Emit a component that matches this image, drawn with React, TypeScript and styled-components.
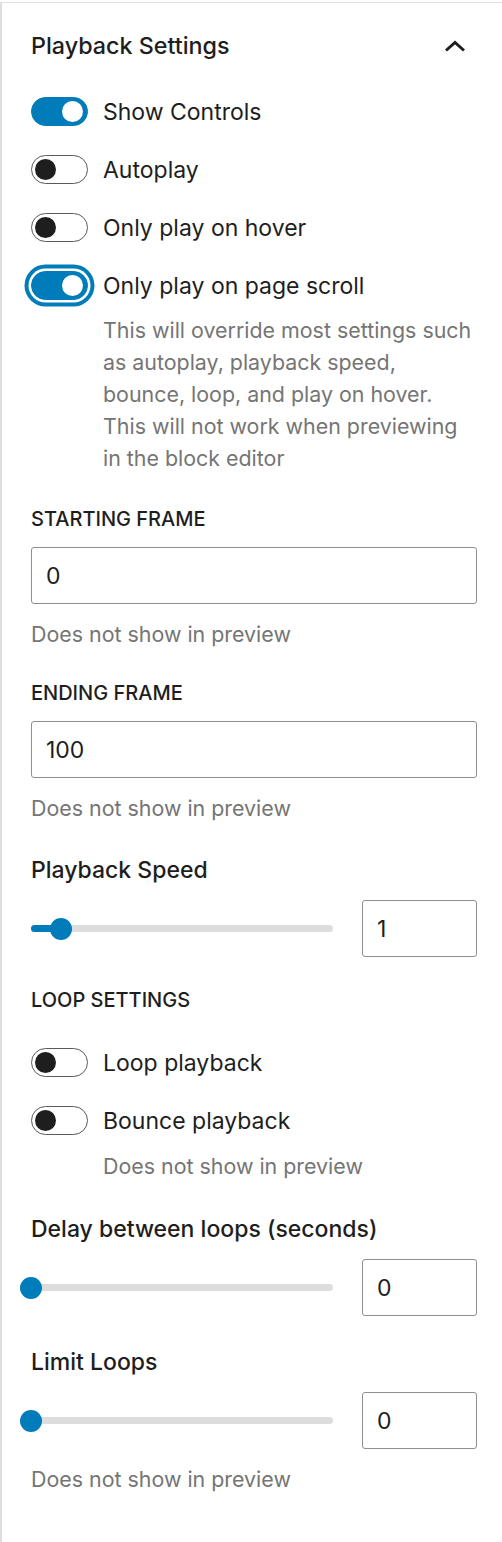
import React, { useState } from "react";
import styled, { createGlobalStyle, css } from "styled-components";

const GlobalStyle = createGlobalStyle`
  html, body {
    margin: 0;
    padding: 0;
    background: #ffffff;
  }
  body {
    font-family: Inter, "Noto Sans", Roboto, sans-serif;
    color: #1e1e1e;
    -webkit-font-smoothing: antialiased;
  }
`;

const BLUE = "#007cba";

const Panel = styled.div`
  margin-top: 2px;
  min-height: 1540px;
  box-sizing: border-box;
  border-left: 2px solid #dedede;
  border-top: 1.5px solid #e0e0e0;
  padding: 0 25px 0 29px;
`;

const Header = styled.div`
  height: 85px;
  display: flex;
  align-items: center;
  justify-content: space-between;
`;

const Title = styled.h2`
  margin: 0;
  font-size: 23.3px;
  font-weight: 500;
  line-height: 32px;
  color: #1e1e1e;
`;

const Chevron = styled.button`
  border: none;
  background: none;
  padding: 0;
  margin-right: 10px;
  width: 24px;
  height: 24px;
  display: flex;
  align-items: center;
  justify-content: center;
  cursor: pointer;
`;

const Body = styled.div`
  padding-top: 9px;
  display: flex;
  flex-direction: column;
`;

const Field = styled.div<{ $mb?: number }>`
  margin-bottom: ${(p) => (p.$mb ?? 30)}px;
`;

const Row = styled.label`
  display: flex;
  align-items: center;
  gap: 15px;
  height: 29px;
  cursor: pointer;
`;

const Track = styled.span<{ $on: boolean; $focus?: boolean }>`
  position: relative;
  flex: none;
  width: 57px;
  height: 29px;
  box-sizing: border-box;
  border-radius: 15px;
  ${(p) =>
    p.$on
      ? css`
          background: ${BLUE};
          border: 1.5px solid ${BLUE};
        `
      : css`
          background: #ffffff;
          border: 1.5px solid #5a5a5a;
        `}
  ${(p) =>
    p.$focus &&
    css`
      box-shadow: 0 0 0 2.5px #ffffff, 0 0 0 6.5px ${BLUE};
    `}
`;

const Knob = styled.span<{ $on: boolean }>`
  position: absolute;
  top: 2.5px;
  left: ${(p) => (p.$on ? "29.5px" : "2.5px")};
  width: 21px;
  height: 21px;
  border-radius: 50%;
  background: ${(p) => (p.$on ? "#ffffff" : "#1e1e1e")};
`;

const ToggleLabel = styled.span`
  font-size: 23px;
  line-height: 32px;
  color: #1e1e1e;
`;

const Help = styled.p<{ $indent?: boolean; $mt?: number }>`
  margin: ${(p) => p.$mt ?? 13}px 0 0 ${(p) => (p.$indent ? "72px" : "0")};
  font-size: 21.4px;
  line-height: 32px;
  color: #757575;
`;

const CapsLabel = styled.div`
  font-size: 20px;
  line-height: 28px;
  font-weight: 500;
  text-transform: uppercase;
  color: #1e1e1e;
  margin-bottom: 14px;
`;

const FieldLabel = styled.div`
  font-size: 23px;
  line-height: 32px;
  font-weight: 500;
  color: #1e1e1e;
  margin-bottom: 14px;
`;

const TextInput = styled.input<{ $narrow?: boolean }>`
  display: block;
  box-sizing: border-box;
  width: ${(p) => (p.$narrow ? "115px" : "100%")};
  height: 57px;
  border: 1.5px solid #8f8f8f;
  border-radius: 3px;
  padding: 0 14px;
  font-family: inherit;
  font-size: 23px;
  color: #1e1e1e;
  background: #ffffff;
  outline: none;
`;

const RangeRow = styled.div`
  display: flex;
  align-items: center;
  gap: 29px;
`;

const RangeTrack = styled.div`
  position: relative;
  flex: 1;
  height: 7px;
  border-radius: 4px;
  background: #dddddd;
`;

const RangeFill = styled.div`
  position: absolute;
  left: 0;
  top: 0;
  bottom: 0;
  border-radius: 4px;
  background: ${BLUE};
`;

const RangeThumb = styled.div`
  position: absolute;
  top: 50%;
  width: 22px;
  height: 22px;
  margin: -11px 0 0 -11px;
  border-radius: 50%;
  background: ${BLUE};
`;

type ToggleProps = {
  label: string;
  initial?: boolean;
  focus?: boolean;
  help?: string;
  helpGap?: number;
  mb?: number;
};

const Toggle = ({ label, initial = false, focus, help, helpGap = 14, mb }: ToggleProps) => {
  const [on, setOn] = useState(initial);
  return (
    <Field $mb={mb}>
      <Row onClick={() => setOn(!on)}>
        <Track $on={on} $focus={focus}>
          <Knob $on={on} />
        </Track>
        <ToggleLabel>{label}</ToggleLabel>
      </Row>
      {help && (
        <Help $indent $mt={helpGap}>
          {help}
        </Help>
      )}
    </Field>
  );
};

type RangeProps = {
  label: string;
  value: number;
  max: number;
  help?: string;
  mb?: number;
};

const Range = ({ label, value, max, help, mb }: RangeProps) => {
  const pct = (value / max) * 100;
  return (
    <Field $mb={mb}>
      <FieldLabel>{label}</FieldLabel>
      <RangeRow>
        <RangeTrack>
          <RangeFill style={{ width: `${pct}%` }} />
          <RangeThumb style={{ left: `${pct}%` }} />
        </RangeTrack>
        <TextInput $narrow defaultValue={String(value)} />
      </RangeRow>
      {help && <Help $mt={14}>{help}</Help>}
    </Field>
  );
};

const App = () => {
  return (
    <>
      <GlobalStyle />
      <Panel>
        <Header>
          <Title>Playback Settings</Title>
          <Chevron aria-label="Collapse">
            <svg width="24" height="24" viewBox="0 0 24 24">
              <path
                d="M3 16.5 L12 8.5 L21 16.5"
                fill="none"
                stroke="#1e1e1e"
                strokeWidth="3"
              />
            </svg>
          </Chevron>
        </Header>
        <Body>
          <Toggle label="Show Controls" initial mb={29} />
          <Toggle label="Autoplay" mb={29} />
          <Toggle label="Only play on hover" mb={29} />
          <Toggle
            label="Only play on page scroll"
            initial
            focus
            mb={31}
            help="This will override most settings such as autoplay, playback speed, bounce, loop, and play on hover. This will not work when previewing in the block editor"
          />

          <Field $mb={29}>
            <CapsLabel>Starting Frame</CapsLabel>
            <TextInput defaultValue="0" />
            <Help $mt={14}>Does not show in preview</Help>
          </Field>

          <Field $mb={30}>
            <CapsLabel>Ending Frame</CapsLabel>
            <TextInput defaultValue="100" />
            <Help $mt={14}>Does not show in preview</Help>
          </Field>

          <Range label="Playback Speed" value={1} max={10} mb={29} />

          <Field $mb={20}>
            <CapsLabel>Loop Settings</CapsLabel>
          </Field>

          <Toggle label="Loop playback" mb={29} />
          <Toggle
            label="Bounce playback"
            mb={31}
            helpGap={15}
            help="Does not show in preview"
          />

          <Range label="Delay between loops (seconds)" value={0} max={10} mb={30} />
          <Range
            label="Limit Loops"
            value={0}
            max={10}
            help="Does not show in preview"
          />
        </Body>
      </Panel>
    </>
  );
};

export default App;
